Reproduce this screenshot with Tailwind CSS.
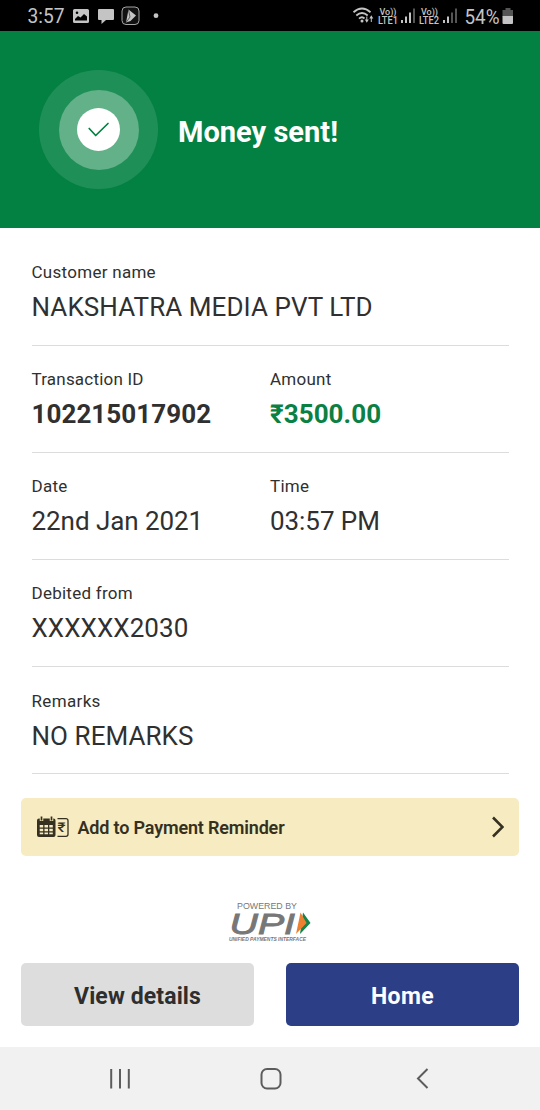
<!DOCTYPE html>
<html lang="en">
<head>
<meta charset="utf-8">
<meta name="viewport" content="width=device-width, initial-scale=1">
<title>Money sent</title>
<script src="https://cdn.jsdelivr.net/npm/@tailwindcss/browser@4"></script>
</head>
<body class="bg-white">
<div class="flex h-[1110px] w-[540px] flex-col overflow-hidden bg-white font-[Roboto,'Noto_Sans',sans-serif] text-[#303030]">

  <!-- Status bar -->
  <header class="h-[31px] shrink-0 bg-black">
    <svg class="block" width="540" height="31" viewBox="0 0 540 31" fill="#c4c4c4" font-family="Roboto, sans-serif">
      <text x="27.500" y="23.300" font-size="19.500" textLength="37" lengthAdjust="spacingAndGlyphs">3:57</text>
      <path fill-rule="evenodd" d="M74.500 9h13a1.500 1.500 0 0 1 1.500 1.500v11a1.500 1.500 0 0 1-1.500 1.500h-13a1.500 1.500 0 0 1-1.500-1.500v-11a1.500 1.500 0 0 1 1.500-1.500zM75 20.500h12v-4l-3-2.500-3.500 3.500-2.500-1.500-3 3zM77 11.500a1.300 1.300 0 1 0 0 2.600 1.300 1.300 0 0 0 0-2.600z"/>
      <path d="M99 9h14a1 1 0 0 1 1 1v9a1 1 0 0 1-1 1h-7l-4.500 4v-4H99a1 1 0 0 1-1-1v-9a1 1 0 0 1 1-1z"/>
      <rect x="122" y="7" width="17" height="17.500" rx="4" fill="#111" stroke="#a5a5a5"/>
      <path d="M128.500 9.500L136 15.500L130.500 21L126 22.500z"/>
      <path d="M128.500 10L130 17L126 22.500" fill="none" stroke="#444" stroke-width=".8"/>
      <circle cx="156" cy="15.700" r="2.400"/>
      <g fill="none" stroke="#c4c4c4" stroke-width="1.800">
        <path d="M353.500 12.200Q362 4.800 370.500 12.200M356.300 15.500Q362 10.500 367.700 15.500M359 18.700Q362 16 364.500 18.500"/>
      </g>
      <circle cx="362" cy="21" r="1.500"/>
      <path d="M364.800 19.500h4l-2 3.200zM369.300 18.500h4l-2-3.200z"/>
      <path d="M366.800 16.500v4M371.300 18v4" stroke="#c4c4c4"/>
      <g font-size="9.500" font-weight="500">
        <text x="379.500" y="14.500" textLength="17" lengthAdjust="spacingAndGlyphs">Vo))</text>
        <text x="378" y="23.500" font-size="10" textLength="20" lengthAdjust="spacingAndGlyphs">LTE1</text>
        <text x="421" y="14.500" textLength="17" lengthAdjust="spacingAndGlyphs">Vo))</text>
        <text x="419" y="23.500" font-size="10" textLength="20" lengthAdjust="spacingAndGlyphs">LTE2</text>
      </g>
      <path d="M401 20h2v3h-2zM405 16.500h2v6.500h-2zM409 12.500h2v10.500h-2zM443 20h2v3h-2zM447 16.500h2v6.500h-2z"/>
      <path fill="#555" d="M413 8.500h2v14.500h-2zM451 12.500h2v10.500h-2zM455 8.500h2v14.500h-2z"/>
      <text x="464.500" y="23.500" font-size="20" textLength="35" lengthAdjust="spacingAndGlyphs">54%</text>
      <path fill="#555" d="M505.500 8h5v2h2.500v6.500h-10.500v-6.500h3z"/>
      <path d="M502.500 16h10.500v7a1 1 0 0 1-1 1h-8.500a1 1 0 0 1-1-1z"/>
    </svg>
  </header>

  <!-- Result banner -->
  <section class="flex h-[197px] shrink-0 items-center gap-[21px] bg-[#038143] pl-[39px]">
    <div class="flex size-[119px] items-center justify-center rounded-full bg-[#1f8f58]">
      <div class="flex size-20 items-center justify-center rounded-full bg-[#62b188]">
        <div class="flex size-[43px] items-center justify-center rounded-full bg-white">
          <svg width="43" height="43" viewBox="0 0 43 43" fill="none" stroke="#038143" stroke-width="1.700" stroke-linecap="round" stroke-linejoin="round"><path d="M12.200 20.500L18.700 27.500L31 15.500"/></svg>
        </div>
      </div>
    </div>
    <h1 class="text-[29.500px] leading-8 font-bold text-white"><svg class="block overflow-visible" width="160" height="32" fill="currentColor"><text x="-1" y="27.500" textLength="160" lengthAdjust="spacingAndGlyphs">Money sent!</text></svg></h1>
  </section>

  <!-- Transaction fields -->
  <main class="mx-[31.500px] flex shrink-0 flex-col">
    <div class="flex h-[118px] flex-col border-b-[1.500px] border-[#dcdcdc] pt-[33px]">
      <div class="text-[17px] leading-[22px] tracking-[0.280px]">Customer name</div>
      <div class="mt-[8px] text-[26px] leading-[32px] tracking-[0.080px]">NAKSHATRA MEDIA PVT LTD</div>
    </div>
    <div class="grid h-[107px] grid-cols-2 border-b border-[#dcdcdc] pt-[22px]">
      <div><div class="text-[17px] leading-[22px] tracking-[0.200px]">Transaction ID</div>
      <div class="mt-[8px] text-[26px] leading-[32px] font-bold tracking-[0.050px]">102215017902</div></div>
      <div><div class="text-[17px] leading-[22px] tracking-[0.250px]">Amount</div>
      <div class="mt-[8px] text-[26px] leading-[32px] font-bold tracking-[0.050px] text-[#0b8043]">₹3500.00</div></div>
    </div>
    <div class="grid h-[107px] grid-cols-2 border-b border-[#dcdcdc] pt-[22px]">
      <div><div class="text-[17px] leading-[22px] tracking-[0.250px]">Date</div>
      <div class="mt-[8px] text-[26px] leading-[32px] tracking-[-0.060px]">22nd Jan 2021</div></div>
      <div><div class="text-[17px] leading-[22px] tracking-[0.250px]">Time</div>
      <div class="mt-[8px] text-[26px] leading-[32px] tracking-[-0.060px]">03:57 PM</div></div>
    </div>
    <div class="h-[107px] border-b border-[#dcdcdc] pt-[22px]">
      <div class="text-[17px] leading-[22px] tracking-[0.250px]">Debited from</div>
      <div class="mt-[8px] text-[26px] leading-[32px] tracking-[0.060px]">XXXXXX2030</div>
    </div>
    <div class="h-[107px] border-b border-[#dcdcdc] pt-[23px]">
      <div class="text-[17px] leading-[22px] tracking-[0.350px]">Remarks</div>
      <div class="mt-[8px] text-[26px] leading-[32px] tracking-[0.060px]">NO REMARKS</div>
    </div>
  </main>

  <!-- Reminder -->
  <button class="mx-[21px] mt-6 flex h-[58px] shrink-0 items-center rounded-[5px] bg-[#f6ebc1] pr-[15px] pl-[15px] text-left text-[#35301f]">
    <svg class="shrink-0" width="34" height="24" viewBox="0 0 34 24" fill="#35301f">
      <path fill-rule="evenodd" d="M3 3.500h14.500a2 2 0 0 1 2 2V20a2 2 0 0 1-2 2H3a2 2 0 0 1-2-2V5.500a2 2 0 0 1 2-2zM3.700 10v2.500h3.500V10zM8.500 10v2.500H12V10zM13.300 10v2.500h3.500V10zM3.700 13.700v2.500h3.500v-2.500zM8.500 13.700v2.500H12v-2.500zM13.300 13.700v2.500h3.500v-2.500zM3.700 17.400v1.800h3.500v-1.800zM8.500 17.400v1.800H12v-1.800zM13.300 17.400v1.800h3.500v-1.800z"/>
      <path d="M5.500 1.500v4.500M15.500 1.500v4.500" stroke="#f6ebc1" stroke-width="3.500"/>
      <path d="M5.500 1.500v4M15.500 1.500v4" stroke="#35301f" stroke-width="1.700"/>
      <path d="M21.500 3.700h8.500a2 2 0 0 1 2 2v13.600a2 2 0 0 1-2 2h-8.500" fill="none" stroke="#35301f" stroke-width="1.300"/>
      <text x="21.500" y="17.200" font-size="13.500" font-weight="500" textLength="8" lengthAdjust="spacingAndGlyphs">₹</text>
    </svg>
    <span class="ml-[7.500px] grow pt-0.5 text-[18px] leading-6 font-semibold tracking-[-0.170px]">Add to Payment Reminder</span>
    <svg class="shrink-0" width="12" height="22" viewBox="0 0 12 22" fill="none" stroke="#35301f" stroke-width="2.600"><path d="M1 1.500L10.500 11L1 20.500"/></svg>
  </button>

  <!-- UPI mark -->
  <div class="mt-11 flex h-[46px] shrink-0 justify-center">
    <svg width="90" height="46" viewBox="225 900 90 46" fill="#777" font-family="Liberation Sans, sans-serif">
      <text x="237" y="908.800" font-size="8.500" textLength="60" lengthAdjust="spacingAndGlyphs">POWERED BY</text>
      <text x="229.500" y="934" font-size="29" font-style="italic" stroke="#777" stroke-width=".9" textLength="65.500" lengthAdjust="spacingAndGlyphs">UPI</text>
      <path fill="#16834a" d="M303 912.500L310.500 923L300 934z"/>
      <path fill="#ee8130" d="M300.500 912.500L306.500 923L296 934z"/>
      <text x="229" y="941.300" font-size="5.500" font-weight="700" font-style="italic" textLength="77" lengthAdjust="spacingAndGlyphs">UNIFIED PAYMENTS INTERFACE</text>
    </svg>
  </div>

  <!-- Actions -->
  <div class="mx-[21px] mt-[17px] grid h-[63px] shrink-0 grid-cols-2 gap-8 text-[23px] font-bold">
    <button class="rounded-[5px] bg-[#dddddd] pt-[5px] tracking-[0.120px] text-[#2e2e2e]">View details</button>
    <button class="rounded-[5px] bg-[#2b3e86] pt-[5px] tracking-[0.400px] text-white">Home</button>
  </div>

  <!-- System navigation -->
  <nav class="mt-auto h-[63px] shrink-0 bg-[#f1f1f1]">
    <svg class="block" width="540" height="63" viewBox="0 0 540 63" fill="none" stroke="#5c5c5c" stroke-width="2">
      <path d="M111.200 22v19.500M120 22v19.500M128.800 22v19.500"/>
      <rect x="261.500" y="22" width="19" height="19.500" rx="5.500"/>
      <path d="M427.500 22L418 31.500L427.500 41"/>
    </svg>
  </nav>
</div>
</body>
</html>
